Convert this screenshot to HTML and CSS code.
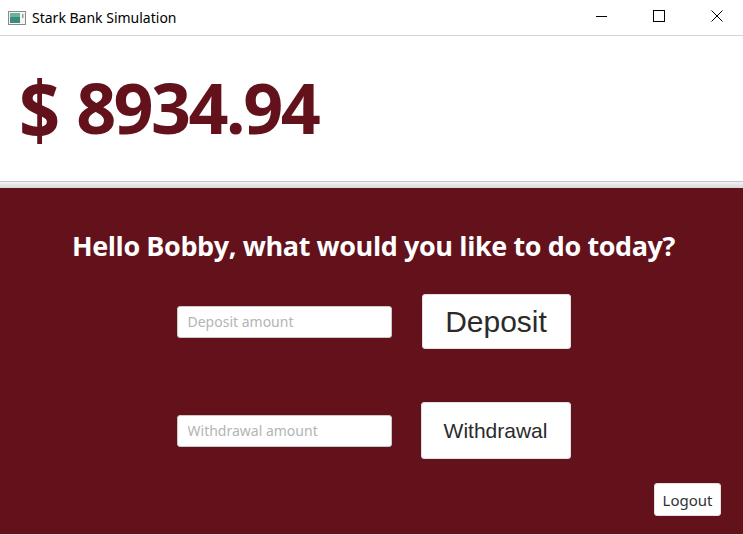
FILE: index.html
```html
<!DOCTYPE html>
<html>
<head>
<meta charset="utf-8">
<link rel="stylesheet" href="styles.css">
</head>
<body>
<div class="window">
  <header class="titlebar">
    <div class="title-left">
      <svg class="app-icon" width="18" height="14" viewBox="0 0 18 14">
        <rect x="0.5" y="0.5" width="17" height="13" fill="#f4f4f4" stroke="#8a8a8a"/>
        <rect x="2" y="2" width="10" height="10" fill="#3c8c7c"/>
        <rect x="2" y="2" width="10" height="4" fill="#6fb0a2"/>
        <rect x="14" y="3" width="1.5" height="4" fill="#9a9a9a"/>
      </svg>
      <span class="title-text">Stark Bank Simulation</span>
    </div>
    <div class="controls">
      <svg width="58" height="35" viewBox="0 0 58 35"><line x1="27" y1="16.5" x2="38" y2="16.5" stroke="#000" stroke-width="1"/></svg>
      <svg width="58" height="35" viewBox="0 0 58 35"><rect x="26.5" y="10.5" width="11" height="11" fill="none" stroke="#000" stroke-width="1"/></svg>
      <svg width="58" height="35" viewBox="0 0 58 35"><path d="M26.5 10.5 L37.5 21.5 M37.5 10.5 L26.5 21.5" stroke="#000" stroke-width="1"/></svg>
    </div>
  </header>
  <section class="balance">
    <span class="currency">$</span><span class="amount">8934.94</span>
  </section>
  <div class="separator"></div>
  <main class="panel">
    <h1 class="greeting">Hello Bobby, what would you like to do today?</h1>
    <div class="actions">
      <div class="row">
        <input class="field" type="text" placeholder="Deposit amount">
        <button class="btn btn-deposit">Deposit</button>
      </div>
      <div class="row">
        <input class="field" type="text" placeholder="Withdrawal amount">
        <button class="btn btn-withdraw">Withdrawal</button>
      </div>
    </div>
    <div class="footer">
      <button class="logout">Logout</button>
    </div>
  </main>
</div>
</body>
</html>
```
FILE: styles.css
```css
html, body {
  margin: 0;
  padding: 0;
  background: #ffffff;
}
.window {
  width: 743px;
  height: 535px;
  display: flex;
  flex-direction: column;
  overflow: hidden;
  font-family: "Open Sans", "Noto Sans", sans-serif;
}
.titlebar {
  height: 35px;
  flex: none;
  border-bottom: 1px solid #d4d4d4;
  display: flex;
  justify-content: space-between;
  align-items: center;
  background: #fff;
}
.title-left {
  display: flex;
  align-items: center;
  padding-left: 8px;
  gap: 6px;
}
.app-icon { display: block; }
.title-text {
  font-family: "Noto Sans", "Open Sans", sans-serif;
  font-size: 14px;
  color: #000;
  margin-top: -1px;
}
.controls {
  display: flex;
}
.controls svg { display: block; }
.balance {
  height: 145px;
  flex: none;
  display: flex;
  align-items: center;
  padding-left: 19px;
  color: #63121c;
  font-family: "Open Sans", sans-serif;
  font-weight: 700;
}
.currency {
  display: inline-block;
  font-size: 72px;
  transform: scaleY(1.12);
  margin-right: 16px;
  margin-top: -2px;
}
.amount {
  font-size: 70px;
  letter-spacing: -2.6px;
  margin-top: -4px;
}
.separator {
  height: 6px;
  flex: none;
  border-top: 1px solid #c6c6c6;
  background: linear-gradient(#f4f4f4, #e2e2e2 60%, #d8d8d8);
}
.panel {
  flex: 1;
  background: #63121c;
  border-bottom: 1px solid #e4dada;
  display: flex;
  flex-direction: column;
  align-items: center;
}
.greeting {
  margin: 39px 0 0;
  font-family: "Open Sans", sans-serif;
  font-weight: 700;
  font-size: 27px;
  color: #ffffff;
  letter-spacing: -0.4px;
  padding-left: 4px;
}
.actions {
  margin-top: 30px;
  margin-left: 5px;
  display: flex;
  flex-direction: column;
  gap: 53px;
}
.row {
  display: grid;
  grid-template-columns: 215px 150px;
  column-gap: 30px;
  align-items: center;
}
.field {
  box-sizing: border-box;
  width: 215px;
  height: 32px;
  border: 1px solid #cfc6c6;
  border-radius: 3px;
  background: #fff;
  padding: 0 10px;
  font-family: "Noto Sans", "Open Sans", sans-serif;
  font-size: 14px;
  color: #333;
  outline: none;
}
.field::placeholder { color: #b4b4b4; }
.btn {
  box-sizing: border-box;
  background: #fff;
  border: 1px solid #e0e0e0;
  border-radius: 3px;
  color: #2b2b2b;
  font-family: "Liberation Sans", Arial, sans-serif;
  padding: 0;
  cursor: pointer;
}
.btn-deposit {
  width: 149px;
  height: 55px;
  font-size: 30px;
}
.btn-withdraw {
  width: 150px;
  height: 57px;
  font-size: 21px;
  margin-left: -1px;
}
.footer {
  align-self: stretch;
  display: flex;
  justify-content: flex-end;
  padding-right: 22px;
  margin-top: 24px;
}
.logout {
  box-sizing: border-box;
  width: 67px;
  height: 33px;
  background: #fff;
  border: 1px solid #e0e0e0;
  border-radius: 3px;
  font-family: "Noto Sans", "Open Sans", sans-serif;
  font-size: 15px;
  color: #333;
  padding: 0;
}
```
